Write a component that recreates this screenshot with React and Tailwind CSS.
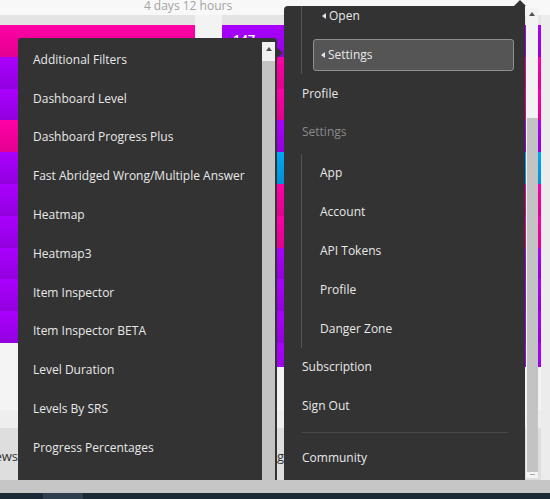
export default function App() {
  const P = "bg-linear-to-b from-[#ff00a6] to-[#e3008f]";
  const V = "bg-linear-to-b from-[#aa00ff] to-[#9200de]";
  const B = "bg-linear-to-b from-[#00a8f5] to-[#0090d8]";
  const leftRows = [P, V, V, P, V, V, V, V, V, V];
  const rightRows = [V, P, P, V, B, P, P, V, V, V];

  const leftItems = [
    "Additional Filters",
    "Dashboard Level",
    "Dashboard Progress Plus",
    "Fast Abridged Wrong/Multiple Answer",
    "Heatmap",
    "Heatmap3",
    "Item Inspector",
    "Item Inspector BETA",
    "Level Duration",
    "Levels By SRS",
    "Progress Percentages",
  ];
  const settingsItems = ["App", "Account", "API Tokens", "Profile", "Danger Zone"];

  const Tri = () => (
    <span className="mr-[3px] inline-block h-0 w-0 border-y-[3.5px] border-r-[4px] border-y-transparent border-r-[#e6e6e6]" />
  );

  return (
    <div
      className="relative h-[499px] w-[550px] overflow-hidden bg-[#f3f3f3]"
      style={{ fontFamily: '"Open Sans", "Noto Sans", sans-serif' }}
    >
      {/* background page */}
      <div className="flex h-[15px] justify-center bg-[#f8f8f8]">
        <span className="-mt-[1px] ml-[-174px] text-[12px] leading-[13px] text-[#a3a3a3]">4 days 12 hours</span>
      </div>
      <div className="flex h-[465px]">
        <div className="flex w-[195px] flex-col">
          <div className="h-[10px] bg-[#e4e4e4]" />
          {leftRows.map((c, i) => (
            <div key={i} className={`h-[31.8px] ${c}`} />
          ))}
          <div className="h-[67px] bg-[#f4f4f4]" />
          <div className="h-[18px] bg-[#eeeeee]" />
          <div className="flex flex-1 items-center bg-[#dedede] pt-[6px]">
            <div className="flex w-[18px] justify-end overflow-hidden text-[13px] text-[#333]">
              <span className="whitespace-nowrap">Reviews</span>
            </div>
          </div>
        </div>
        <div className="flex w-[27px] flex-col">
          <div className="h-[395px] bg-[#f3f3f3]" />
          <div className="h-[18px] bg-[#eeeeee]" />
          <div className="flex-1 bg-[#dedede]" />
        </div>
        <div className="flex w-[319px] flex-col">
          <div className="h-[10px] bg-[#e4e4e4]" />
          {rightRows.map((c, i) => (
            <div key={i} className={`h-[31.8px] ${c} ${i === 0 ? "pl-[11px] pt-[8px] text-[13px] font-semibold leading-[13px] text-white" : ""}`}>
              {i === 0 ? "147" : null}
            </div>
          ))}
          <div className="h-[24px] bg-linear-to-b from-[#aa00ff] to-[#9d00ee]" />
          <div className="h-[43px] bg-[#f3f3f3]" />
          <div className="h-[18px] bg-[#eeeeee]" />
          <div className="flex flex-1 items-center bg-[#dedede] pt-[6px]">
            <div className="flex w-[62px] justify-end overflow-hidden text-[13px] text-[#333]">
              <span className="whitespace-nowrap">Learning</span>
            </div>
          </div>
        </div>
        <div className="flex-1 bg-[#ececec]" />
      </div>
      <div className="h-[13px] bg-[#c6c6c6]" />
      <div className="flex h-[6px] bg-[#1b2937]">
        <div className="ml-[43px] w-[40px] bg-[#2e3e4e]" />
      </div>

      {/* left dropdown menu */}
      <div className="absolute left-[18px] top-[38px] h-[442px] w-[259px] overflow-hidden rounded-t-[3px] bg-[#333333]">
        <ul className="pl-[15px] pt-[2.5px]">
          {leftItems.map((t) => (
            <li key={t} className="flex h-[38.8px] items-center whitespace-nowrap text-[12px] text-[#e8e8e8]">
              {t}
            </li>
          ))}
        </ul>
        <div className="absolute bottom-0 right-[2px] top-[4px] flex w-[13px] flex-col">
          <div className="flex h-[19px] justify-center bg-[#f1f1f1] pt-[5px]">
            <span className="h-0 w-0 border-x-[3px] border-b-[4px] border-x-transparent border-b-[#505050]" />
          </div>
          <div className="flex-1 bg-[#c3c3c3]" />
        </div>
      </div>
      <span className="absolute left-[277px] top-[48px] h-0 w-0 border-y-[5px] border-l-[6px] border-y-transparent border-l-[#333333]" />

      {/* right dropdown menu */}
      <span className="absolute left-[514px] top-0 h-0 w-0 border-x-[6px] border-b-[6px] border-x-transparent border-b-[#333333]" />
      <div className="absolute left-[284px] top-[6px] h-[474px] w-[241px] overflow-hidden rounded-tl-[4px] bg-[#333333] text-[12px] text-[#e8e8e8]">
        <div className="-mt-[9.4px] pl-[17px] pr-[11px]">
          <ul className="border-l border-[#555555]">
            <li className="flex h-[38.8px] items-center pl-[20px]">
              <Tri />
              Open
            </li>
            <li className="flex h-[38.8px] items-center pl-[11px]">
              <div className="flex h-[32px] w-[201px] items-center rounded-[3px] border border-[#8f8f8f] bg-[#555555] pl-[7px]">
                <Tri />
                Settings
              </div>
            </li>
          </ul>
          <div className="flex h-[38.8px] items-center pl-[1px]">Profile</div>
          <div className="flex h-[38.8px] items-center pl-[1px] text-[#8a8a8a]">Settings</div>
          <ul className="mt-[2.2px] border-l border-[#555555] pl-[18px]">
            {settingsItems.map((t) => (
              <li key={t} className="flex h-[38.8px] items-center">
                {t}
              </li>
            ))}
          </ul>
          <div className="flex h-[38.8px] items-center pl-[1px]">Subscription</div>
          <div className="flex h-[38.8px] items-center pl-[1px]">Sign Out</div>
          <div className="flex h-[13.4px] items-center pl-[1px] pr-[6px]">
            <div className="h-px w-full bg-[#484848]" />
          </div>
          <div className="flex h-[38.8px] items-center pl-[1px]">Community</div>
        </div>
      </div>
      <div className="absolute left-[526px] top-[8px] flex h-[470px] w-[12px] flex-col bg-[#f3f3f3]">
        <div className="flex h-[18px] justify-center pt-[4px]">
          <span className="h-0 w-0 border-x-[3px] border-b-[4px] border-x-transparent border-b-[#505050]" />
        </div>
        <div className="h-[92px]" />
        <div className="ml-[1px] h-[354px] w-[11px] bg-[#c3c3c3]" />
        <div className="flex flex-1 justify-center pt-[2px]">
          <span className="h-px w-[5px] bg-[#aaaaaa]" />
        </div>
      </div>
    </div>
  );
}
